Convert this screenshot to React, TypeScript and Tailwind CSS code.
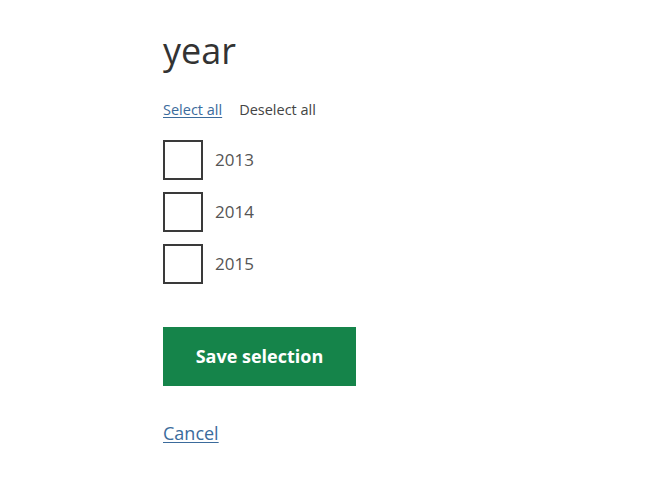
import { useState } from "react";

const years = ["2013", "2014", "2015"];

export default function App() {
    const [checked, setChecked] = useState<Record<string, boolean>>({});

    return (
        <div className="min-h-screen bg-white pl-[163px] pt-[29px] font-['Open_Sans',sans-serif] text-[#333]">
            <h1 className="text-[36px] leading-[44px] text-[#333]">year</h1>

            <div className="mt-[27px] flex items-center gap-[17px] text-[14.5px] leading-[20px]">
                <a href="#" className="text-[#3b6b9c] underline underline-offset-2">Select all</a>
                <button className="text-[#444]" onClick={() => setChecked({})}>Deselect all</button>
            </div>

            <div className="mt-[20px] flex flex-col gap-[12px]">
                {years.map((y) => (
                    <label key={y} className="flex items-center gap-[12px] cursor-pointer">
                        <span
                            className="w-[40px] h-[40px] border-2 border-[#3a3a3a] bg-white flex items-center justify-center"
                            onClick={() => setChecked({ ...checked, [y]: !checked[y] })}
                        >
                            {checked[y] && <span className="text-[22px]">✓</span>}
                        </span>
                        <span className="text-[17px] text-[#555]">{y}</span>
                    </label>
                ))}
            </div>

            <button className="mt-[43px] w-[193px] h-[59px] bg-[#15844a] text-white font-bold text-[18px]">
                Save selection
            </button>

            <div className="mt-[34px]">
                <a href="#" className="text-[18px] text-[#3b6b9c] underline underline-offset-2">Cancel</a>
            </div>
        </div>
    );
}
